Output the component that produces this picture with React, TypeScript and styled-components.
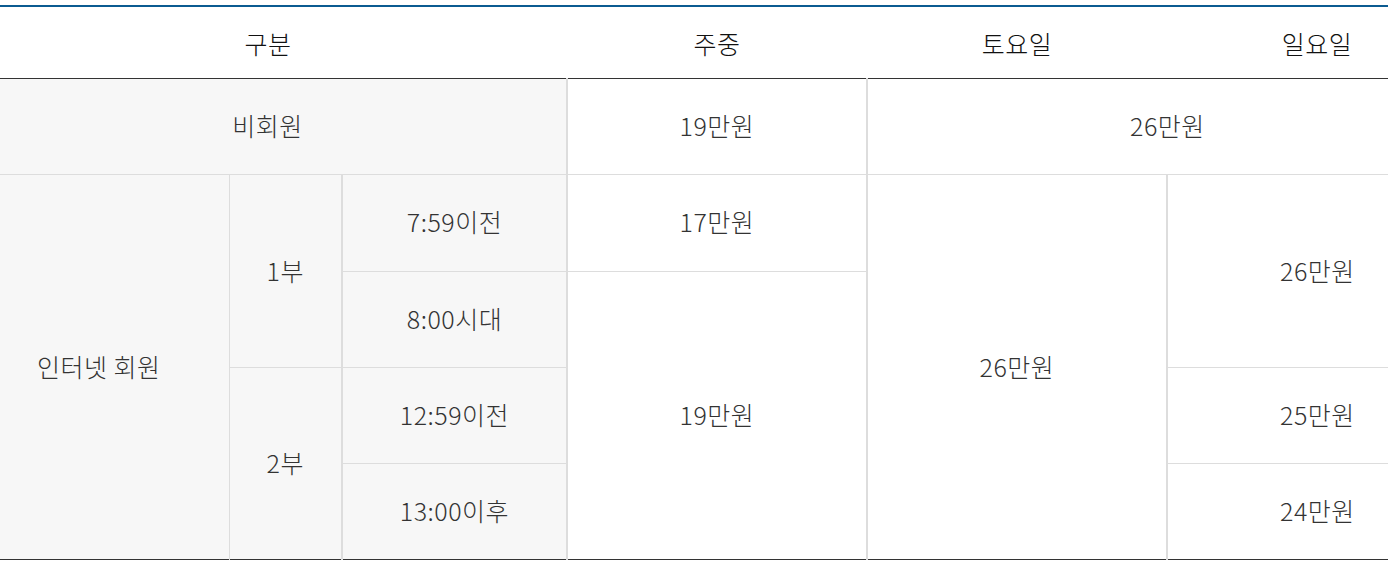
import React from 'react';
import styled, { createGlobalStyle } from 'styled-components';

const GlobalStyle = createGlobalStyle`
  html, body {
    margin: 0;
    padding: 0;
    background: #ffffff;
  }
  body {
    font-family: "Noto Sans CJK KR", "Noto Sans", sans-serif;
    color: #333333;
  }
`;

const Page = styled.div`
  width: 1388px;
  height: 565px;
  overflow: hidden;
  padding-top: 5px;
  box-sizing: border-box;
`;

const PriceTable = styled.table`
  margin-left: -31px;
  width: 1498px;
  table-layout: fixed;
  border-collapse: collapse;
  border-top: 2px solid #0b5b91;
  border-bottom: 1px solid #333333;
`;

const HeadCell = styled.th`
  height: 71px;
  padding: 0;
  font-size: 25px;
  font-weight: 300;
  letter-spacing: 0.5px;
  color: #111111;
  text-align: center;
  vertical-align: middle;
  border-bottom: 1px solid #333333;
`;

const Cell = styled.td<{ $gray?: boolean; $thin?: boolean }>`
  box-sizing: border-box;
  height: 96.25px;
  padding: 0 0 3px;
  font-size: 25px;
  font-weight: 300;
  letter-spacing: 0.5px;
  color: #333333;
  text-align: center;
  vertical-align: middle;
  background: ${p => (p.$gray ? '#f7f7f7' : '#ffffff')};
  border-top: 1px solid #dddddd;
  border-left: ${p => (p.$thin ? '1px' : '2px')} solid #dddddd;
`;

const FirstCell = styled(Cell)`
  border-left: none;
`;

const colWidths = [260, 113, 225, 300, 300, 300];

export default function App() {
  return (
    <>
      <GlobalStyle />
      <Page>
        <PriceTable>
          <colgroup>
            {colWidths.map((w, i) => (
              <col key={i} style={{ width: w }} />
            ))}
          </colgroup>
          <thead>
            <tr>
              <HeadCell colSpan={3}>구분</HeadCell>
              <HeadCell>주중</HeadCell>
              <HeadCell>토요일</HeadCell>
              <HeadCell>일요일</HeadCell>
            </tr>
          </thead>
          <tbody>
            <tr>
              <FirstCell $gray colSpan={3}>비회원</FirstCell>
              <Cell>19만원</Cell>
              <Cell colSpan={2}>26만원</Cell>
            </tr>
            <tr>
              <FirstCell $gray rowSpan={4}>인터넷 회원</FirstCell>
              <Cell $gray $thin rowSpan={2}>1부</Cell>
              <Cell $gray>7:59이전</Cell>
              <Cell>17만원</Cell>
              <Cell rowSpan={4}>26만원</Cell>
              <Cell rowSpan={2}>26만원</Cell>
            </tr>
            <tr>
              <Cell $gray>8:00시대</Cell>
              <Cell rowSpan={3}>19만원</Cell>
            </tr>
            <tr>
              <Cell $gray $thin rowSpan={2}>2부</Cell>
              <Cell $gray>12:59이전</Cell>
              <Cell>25만원</Cell>
            </tr>
            <tr>
              <Cell $gray>13:00이후</Cell>
              <Cell>24만원</Cell>
            </tr>
          </tbody>
        </PriceTable>
      </Page>
    </>
  );
}
